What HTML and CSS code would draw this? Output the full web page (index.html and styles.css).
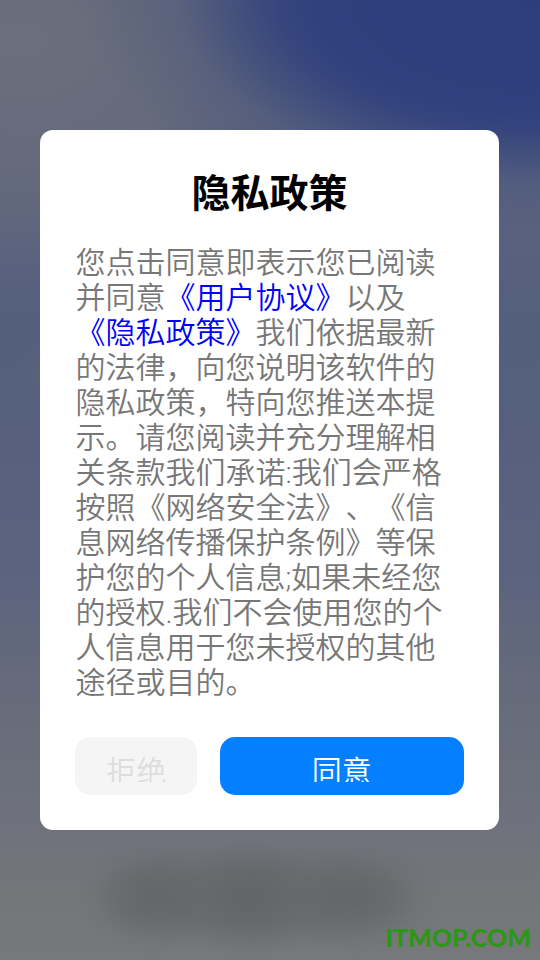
FILE: index.html
```
<!DOCTYPE html>
<html lang="zh-CN">
<head>
<meta charset="utf-8">
<meta name="viewport" content="width=device-width, initial-scale=1">
<title>隐私政策</title>
<link rel="stylesheet" href="styles.css">
</head>
<body>
<main class="page">
  <section class="dialog" role="dialog" aria-modal="true" aria-labelledby="dialog-title">
    <h1 class="dialog-title" id="dialog-title">隐私政策</h1>
    <p class="dialog-text">您点击同意即表示您已阅读并同意<a href="#agreement">《用户协议》</a>以及<a href="#privacy">《隐私政策》</a>我们依据最新的法律，向您说明该软件的隐私政策，特向您推送本提示。请您阅读并充分理解相关条款我们承诺:我们会严格按照《网络安全法》、《信息网络传播保护条例》等保护您的个人信息;如果未经您的授权.我们不会使用您的个人信息用于您未授权的其他途径或目的。</p>
    <div class="actions">
      <button class="btn btn-decline" type="button"><span class="btn-label">拒绝</span></button>
      <button class="btn btn-accept" type="button"><span class="btn-label">同意</span></button>
    </div>
  </section>
  <div class="watermark">ITMOP.COM</div>
</main>
</body>
</html>
```
FILE: styles.css
```
* {
  box-sizing: border-box;
}

body {
  margin: 0;
  font-family: Roboto, "Noto Sans CJK SC", sans-serif;
  text-spacing-trim: space-all;
}

.page {
  position: relative;
  display: flex;
  align-items: center;
  justify-content: center;
  min-height: 100vh;
  padding-right: 1px;
  background:
    radial-gradient(ellipse 14% 6% at 28% 93.5%, #606164b3 0%, #60616473 40%, #60616422 75%, #60616400 100%),
    radial-gradient(ellipse 14% 6% at 46% 93.5%, #606164b3 0%, #60616473 40%, #60616422 75%, #60616400 100%),
    radial-gradient(ellipse 16% 6% at 66% 93.5%, #606164b3 0%, #60616473 40%, #60616422 75%, #60616400 100%),
    radial-gradient(ellipse 30% 6% at 47% 93.5%, #60616480 0%, #60616460 50%, #60616400 100%),
    radial-gradient(ellipse 5% 4% at 9% 39%, #62647299 0%, #62647200 100%),
    radial-gradient(ellipse 85% 24% at 100% 0%, #2e3d7c 0%, #30407d 48%, #31417ddd 57%, #35457d99 67%, #41507d4d 79%, #4f5b7e00 100%),
    radial-gradient(ellipse 70% 26% at 4% 4%, #6c6f7c 0%, #6a6d7bcc 45%, #646a7c00 100%),
    linear-gradient(180deg, #4a577e 0%, #5a627e 20%, #545f7e 34%, #56607e 45%, #5c637e 60%, #666b7b 72%, #6f727c 86%, #757679 94%, #777879 100%);
}

.dialog {
  width: 85%;
  padding: 42px 35px 35px;
  border-radius: 13px;
  background: #fff;
}

.dialog-title {
  margin: 0 0 28px;
  color: #000;
  font-size: 39px;
  line-height: 45px;
  text-align: center;
}

.dialog-text {
  margin: 0 0 37px;
  color: #777;
  font-size: 30px;
  font-weight: 350;
  line-height: 35px;
}

.dialog-text a {
  color: #00f;
  text-decoration: none;
}

.actions {
  display: grid;
  grid-template-columns: 1fr 2fr;
  gap: 23px;
}

.btn {
  padding: 13px;
  border: 0;
  border-radius: 15px;
  font: inherit;
  font-size: 30px;
  font-weight: 350;
  line-height: 44px;
}

/* The label window is shorter than its line, so glyph bottoms are cut off. */
.btn-label {
  display: block;
  height: 32px;
  overflow: hidden;
}

.btn-decline {
  background: #f5f5f5;
  color: #ddd;
}

.btn-accept {
  background: #047fff;
  color: #fff;
}

.watermark {
  position: absolute;
  right: 9px;
  bottom: 8px;
  color: #2a9716;
  font: 900 25px/30px Lato, sans-serif;
}
```
